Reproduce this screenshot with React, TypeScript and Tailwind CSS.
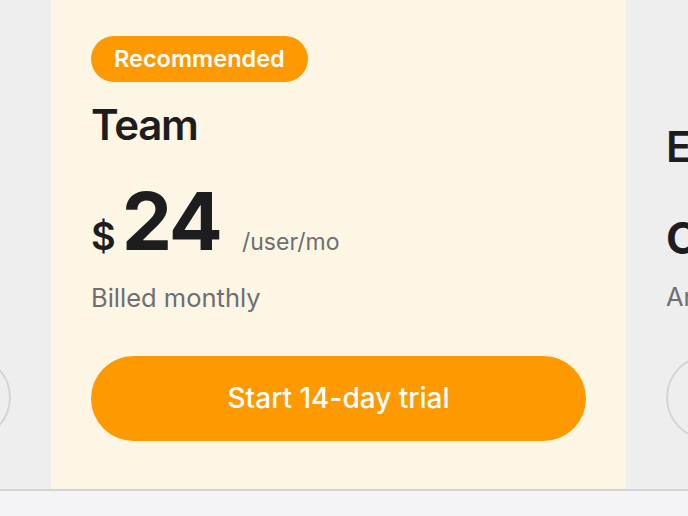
const plans = [
  {
    name: "Starter",
    price: "Free",
    note: "Forever",
    cta: "Get started",
  },
]

function OutlineButton({ label }: { label: string }) {
  return (
    <button
      type="button"
      className="w-full h-[85px] rounded-full border-2 border-[#d4d4d8] text-[28px] text-[#1d1d1f] flex items-center justify-center"
    >
      {label}
    </button>
  )
}

export default function App() {
  return (
    <div className="w-[688px] h-[516px] overflow-hidden bg-[#eeeeee] font-['Inter',sans-serif] flex flex-col">
      <div className="h-[489px] overflow-hidden">
        <div className="flex h-full -ml-[524px]">
          {/* left card, only the button edge shows */}
          <div className="w-[575px] shrink-0 px-10 flex flex-col">
            <div className="h-[355px] flex flex-col justify-end pb-[45px]">
              <div className="text-[42px] leading-none font-semibold tracking-[-0.03em] text-[#1d1d1f]">{plans[0].name}</div>
            </div>
            <OutlineButton label={plans[0].cta} />
          </div>

          {/* recommended card */}
          <div className="w-[575px] shrink-0 bg-[#fdf6e5] px-10 pt-9 flex flex-col">
            <div className="self-start h-[46px] px-[23px] rounded-full bg-[#ff9900] text-white text-[23.5px] font-semibold flex items-center">
              Recommended
            </div>
            <div className="mt-[22px] text-[42px] leading-none font-semibold tracking-[-0.03em] text-[#1d1d1f]">Team</div>
            <div className="mt-[35px] flex items-baseline leading-none text-[#1d1d1f]">
              <span className="text-[38px] font-semibold mr-1.5">$</span>
              <span className="text-[80px] font-bold tracking-tight">24</span>
              <span className="ml-[21px] text-[23px] text-[#6e6e73]">/user/mo</span>
            </div>
            <div className="mt-6 text-[25.5px] leading-none text-[#6e6e73]">Billed monthly</div>
            <button
              type="button"
              className="mt-[45px] w-full h-[85px] rounded-full bg-[#ff9900] text-white text-[28px] font-medium flex items-center justify-center"
            >
              Start 14-day trial
            </button>
          </div>

          {/* right card */}
          <div className="w-[575px] shrink-0 px-10 pt-[126px] flex flex-col">
            <div className="text-[42px] leading-none font-semibold tracking-[-0.03em] text-[#1d1d1f]">Enterprise</div>
            <div className="mt-12 text-[44px] leading-none font-bold text-[#1d1d1f]">Custom</div>
            <div className="mt-6 text-[25.5px] leading-none text-[#6e6e73]">Annual billing</div>
            <div className="mt-[45px]">
              <OutlineButton label="Contact sales" />
            </div>
          </div>
        </div>
      </div>
      <div className="flex-1 border-t-2 border-[#d4d4d8] bg-[#f4f4f6]" />
    </div>
  )
}
